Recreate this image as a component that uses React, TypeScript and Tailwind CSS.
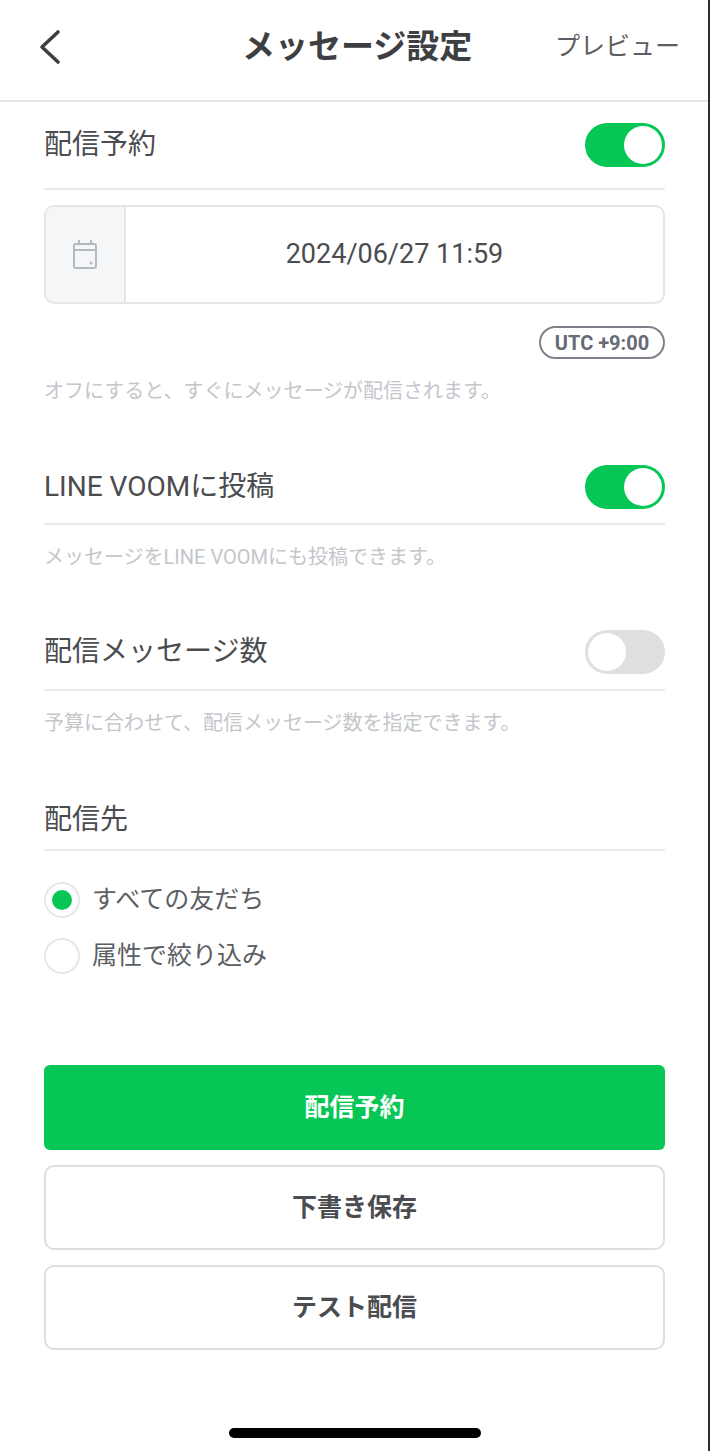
const font = "font-['Roboto','Noto_Sans_CJK_JP',sans-serif]";

function Toggle({ on }: { on: boolean }) {
  return (
    <div
      className={`flex h-[44px] w-[80px] items-center rounded-full p-[3px] ${
        on ? "justify-end bg-[#06c755]" : "justify-start bg-[#dedfe0]"
      }`}
    >
      <div className="h-[38px] w-[38px] rounded-full bg-white" />
    </div>
  );
}

function SectionHead({ title, on, h }: { title: string; on?: boolean; h: string }) {
  return (
    <div className={`flex items-center justify-between border-b-2 border-[#e9eaec] ${h}`}>
      <span className="text-[28px] leading-[40px] text-[#4a4c50]">{title}</span>
      {on !== undefined && <Toggle on={on} />}
    </div>
  );
}

function Hint({ text }: { text: string }) {
  return <p className="text-[20px] leading-[28px] text-[#c3c6cb]">{text}</p>;
}

function Radio({ label, on }: { label: string; on?: boolean }) {
  return (
    <div className="flex h-[56px] items-center gap-[12px]">
      <div className="flex h-[36px] w-[36px] items-center justify-center rounded-full border-2 border-[#e6e7e8] bg-white">
        {on && <div className="h-[20px] w-[20px] rounded-full bg-[#06c755]" />}
      </div>
      <span className="text-[25px] leading-[36px] text-[#5b5e63]">{label}</span>
    </div>
  );
}

function OutlineButton({ label }: { label: string }) {
  return (
    <button className="flex h-[85px] w-full items-center justify-center rounded-[10px] border-2 border-[#dcdee1] bg-white text-[25px] font-bold text-[#4a4c50]">
      {label}
    </button>
  );
}

export default function App() {
  return (
    <div className={`${font} flex h-[1451px] w-[710px] flex-col overflow-hidden border-r-2 border-[#2e2e30] bg-white`}>
      <header className="relative flex h-[102px] shrink-0 items-center justify-between border-b-2 border-[#e4e5e7] pb-[6px] pl-[38px] pr-[28px]">
        <svg width="24" height="36" viewBox="0 0 24 36" fill="none" stroke="#3d3f43" strokeWidth="3.6" strokeLinecap="round" strokeLinejoin="round">
          <path d="M20 3 L4 18 L20 33" />
        </svg>
        <h1 className="absolute left-[242px] text-[33px] font-bold leading-[44px] text-[#3d3f43]">メッセージ設定</h1>
        <span className="text-[25px] leading-[36px] text-[#5b5e63]">プレビュー</span>
      </header>

      <main className="flex flex-col pl-[44px] pr-[43px]">
        <SectionHead title="配信予約" on h="h-[88px]" />

        <div className="mt-[15px] flex h-[99px] overflow-hidden rounded-[10px] border-2 border-[#e4e6e8]">
          <div className="flex w-[80px] items-center justify-center border-r-2 border-[#e4e6e8] bg-[#f5f6f8]">
            <svg width="26" height="34" viewBox="0 0 26 34" fill="none" stroke="#b5b8bd" strokeWidth="2">
              <rect x="2" y="6" width="22" height="24" rx="2" />
              <path d="M2 12 H24 M7 2 V6 M19 2 V6" />
              <circle cx="19" cy="25" r="0.6" />
            </svg>
          </div>
          <div className="flex flex-1 items-center justify-center text-[27px] text-[#4a4c50]">2024/06/27 11:59</div>
        </div>

        <div className="mt-[22px] flex justify-end">
          <span className="flex h-[33px] w-[126px] items-center justify-center rounded-full border-2 border-[#7e818a] text-[20px] font-bold text-[#666a75]">
            UTC +9:00
          </span>
        </div>

        <div className="mt-[18px]">
          <Hint text="オフにすると、すぐにメッセージが配信されます。" />
        </div>

        <div className="mt-[45px]">
          <SectionHead title="LINE VOOMに投稿" on h="h-[75px]" />
        </div>
        <div className="mt-[18px]">
          <Hint text="メッセージをLINE VOOMにも投稿できます。" />
        </div>

        <div className="mt-[44px]">
          <SectionHead title="配信メッセージ数" on={false} h="h-[76px]" />
        </div>
        <div className="mt-[18px]">
          <Hint text="予算に合わせて、配信メッセージ数を指定できます。" />
        </div>

        <div className="mt-[54px]">
          <SectionHead title="配信先" h="h-[60px]" />
        </div>

        <div className="mt-[21px] flex flex-col">
          <Radio label="すべての友だち" on />
          <Radio label="属性で絞り込み" />
        </div>

        <div className="mt-[81px] flex flex-col gap-[15px]">
          <button className="flex h-[85px] w-full items-center justify-center rounded-[6px] bg-[#06c755] text-[25px] font-bold text-white">
            配信予約
          </button>
          <OutlineButton label="下書き保存" />
          <OutlineButton label="テスト配信" />
        </div>

        <div className="mt-[78px] flex justify-center">
          <div className="h-[10px] w-[252px] rounded-full bg-black" />
        </div>
      </main>
    </div>
  );
}
